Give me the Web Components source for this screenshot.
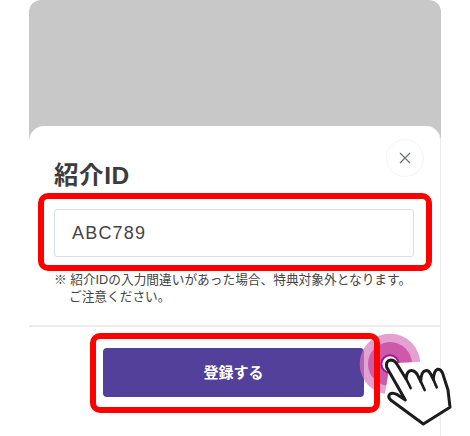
<!DOCTYPE html>
<html lang="ja"><head><meta charset="utf-8"><style>
html,body{margin:0;background:#fff}
body{font-family:"Liberation Sans","Noto Sans CJK JP",sans-serif;color:#3d3d3d}
</style></head><body>
<referral-demo>
  <referral-sheet>
    <span slot="title">紹介ID</span>
    <span slot="note">※ 紹介IDの入力間違いがあった場合、特典対象外となります。<br><span style="padding-left:15px">ご注意ください。</span></span>
    <span slot="action">登録する</span>
  </referral-sheet>
</referral-demo>
<script>
class ReferralDemo extends HTMLElement{constructor(){super();this.attachShadow({mode:'open'}).innerHTML=`<style>
:host{display:block;width:470px;height:436px;overflow:hidden;position:relative}
.frame{margin-left:29px;width:412px;height:436px;background:#c8c8c8;border-radius:12px 12px 0 0;display:flex;flex-direction:column;justify-content:flex-end}
</style><div class="frame"><slot></slot></div>`}}
class ReferralSheet extends HTMLElement{constructor(){super();this.attachShadow({mode:'open'}).innerHTML=`<style>
:host{display:block;height:310px;background:#fff;border-radius:15px 15px 0 0;border-right:1px solid #ededed;box-sizing:border-box;position:relative}
.body{height:199px;box-sizing:border-box;padding:37px 26px 0 25px;display:flex;flex-direction:column}
h2{margin:0;font:700 24.5px/26px "Liberation Sans","Noto Sans CJK JP",sans-serif;letter-spacing:.6px;color:#3c3c3c;height:46px;white-space:nowrap}
.input{height:48px;box-sizing:border-box;border:1px solid #d9e0e3;border-radius:3px;display:flex;align-items:center;padding-left:17px;font:18px/1 "Liberation Sans",sans-serif;letter-spacing:1.2px;color:#444;flex:none}
.note{margin:15px 0 0;font:400 12.7px/17px "Liberation Sans","Noto Sans CJK JP",sans-serif;color:#444;white-space:nowrap}
.close{position:absolute;left:357px;top:13px;width:38px;height:38px;border-radius:50%;border:1px solid #f5f5f5;box-sizing:border-box;display:flex;align-items:center;justify-content:center}
.foot{border-top:2px solid #ececec;box-sizing:border-box;height:111px;padding:21px 0 0 74px}
.btn{width:261px;height:49px;border-radius:4px;background:#53409b;color:#fff;display:flex;align-items:center;justify-content:center;font:700 15px/1 "Noto Sans CJK JP",sans-serif;padding-bottom:2px;box-sizing:border-box}
.red{position:absolute;border:6px solid #f00;border-radius:10px;box-sizing:border-box;pointer-events:none}
.r1{left:9px;top:67px;width:394px;height:78px}
.r2{left:61px;top:207px;width:290px;height:80px}
.ripple{position:absolute;left:311px;top:194px}
.hand{position:absolute;left:311px;top:194px}
</style>
<div class="body"><h2><slot name="title"></slot></h2>
<div class="input">ABC789</div>
<p class="note"><slot name="note"></slot></p></div>
<div class="close"><svg width="12" height="12" viewBox="0 0 12 12"><path d="M1 1L11 11M11 1L1 11" stroke="#6b6e78" stroke-width="1.2" fill="none"/></svg></div>
<div class="foot"><div class="btn"><slot name="action"></slot></div></div>
<svg class="ripple" width="130" height="116" viewBox="0 0 390 348">
<defs><clipPath id="c"><path d="M150 130L300 122L300 0L0 0L0 348L128 260Z"/></clipPath></defs>
<g clip-path="url(#c)"><circle cx="150" cy="132" r="91" fill="#d878bd" fill-opacity=".7"/><circle cx="150" cy="132" r="66" fill="#c23c98" fill-opacity=".7"/><circle cx="150" cy="132" r="29" fill="#a80f8c"/><circle cx="150" cy="132" r="23" fill="#fff"/></g></svg>
<div class="red r1"></div><div class="red r2"></div>
<svg class="hand" width="130" height="116" viewBox="0 0 390 348"><path d="M140 142Q136 122 152 120Q164 120 172 134L198 176Q200 150 218 152Q226 153 232 164L242 184Q244 154 256 152Q266 150 272 162L280 178Q282 152 292 148Q302 146 308 160L324 210L330 262L250 312L152 240Q142 230 150 222Q158 216 172 224L196 240Z" fill="#fff" stroke="#1c1c1c" stroke-width="9" stroke-linejoin="round"/><path d="M198 176L212 204M242 184L254 210M280 178L290 202" stroke="#1c1c1c" stroke-width="8" stroke-linecap="round" fill="none"/></svg>`}}
customElements.define('referral-demo',ReferralDemo);
customElements.define('referral-sheet',ReferralSheet);
</script></body></html>
